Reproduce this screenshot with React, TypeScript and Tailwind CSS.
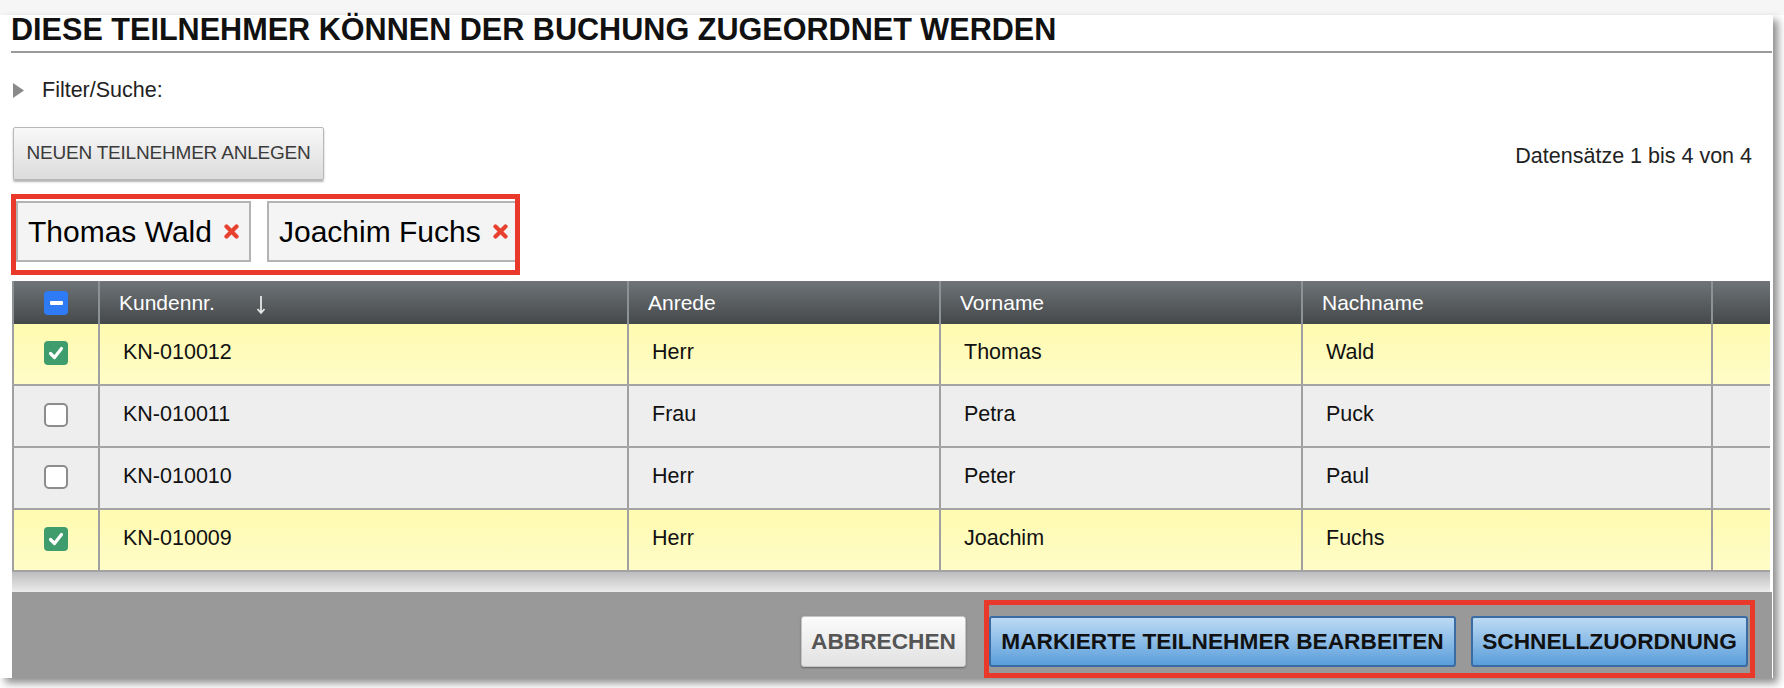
const rows = [
  { sel: true, nr: 'KN-010012', anrede: 'Herr', vorname: 'Thomas', nachname: 'Wald' },
  { sel: false, nr: 'KN-010011', anrede: 'Frau', vorname: 'Petra', nachname: 'Puck' },
  { sel: false, nr: 'KN-010010', anrede: 'Herr', vorname: 'Peter', nachname: 'Paul' },
  { sel: true, nr: 'KN-010009', anrede: 'Herr', vorname: 'Joachim', nachname: 'Fuchs' },
]

const CheckBox = ({ checked }: { checked: boolean }) =>
  checked ? (
    <div className="w-[24px] h-[24px] rounded-[4px] bg-[#3f9c6c] flex items-center justify-center">
      <svg width="18" height="18" viewBox="0 0 18 18">
        <path d="M3.5 9.5 L7.5 13.5 L14.5 4.5" fill="none" stroke="white" strokeWidth="3.2" strokeLinecap="round" strokeLinejoin="round" />
      </svg>
    </div>
  ) : (
    <div className="w-[24px] h-[24px] rounded-[5px] bg-white border-2 border-[#8c8c8c]" />
  )

const Tag = ({ name }: { name: string }) => (
  <div className="shrink-0 h-[61px] flex items-center gap-[12px] px-[10px] bg-[#f4f4f4] border-2 border-[#b3b3b3]">
    <span className="text-[30px] leading-none text-black">{name}</span>
    <svg width="15" height="15" viewBox="0 0 15 15" className="shrink-0">
      <path d="M2.5 2.5 L12.5 12.5 M12.5 2.5 L2.5 12.5" stroke="#e8412f" strokeWidth="4.2" strokeLinecap="round" />
    </svg>
  </div>
)

const App = () => {
  return (
    <div className="w-[1784px] h-[688px] overflow-hidden bg-white font-['Liberation_Sans',Arial,sans-serif] text-[#111]">
      <div className="h-[15px] bg-[#f6f6f6]" />
      <div className="w-[1773px] bg-white shadow-[5px_5px_8px_rgba(0,0,0,0.45)]">
        {/* Title */}
        <h1 className="ml-[11px] mr-[1px] text-[30.6px] leading-[28px] font-bold pb-[8px] border-b-2 border-[#9a9a9a]">
          DIESE TEILNEHMER KÖNNEN DER BUCHUNG ZUGEORDNET WERDEN
        </h1>

        {/* Filter */}
        <div className="mt-[25px] ml-[13px] h-[24px] flex items-center gap-[18px]">
          <svg width="11" height="15" viewBox="0 0 11 15">
            <polygon points="0,0 11,7.5 0,15" fill="#8a8a8a" />
          </svg>
          <span className="text-[21.5px] leading-[24px] text-[#222]">Filter/Suche:</span>
        </div>

        {/* Button row */}
        <div className="mt-[25px] ml-[13px] pr-[21px] flex items-center justify-between">
          <button className="w-[311px] h-[53px] rounded-[2px] border border-[#b8b8b8] bg-gradient-to-b from-[#f8f8f8] to-[#dcdcdc] shadow-[0_2px_2px_rgba(0,0,0,0.3)] text-[19px] text-[#3a3a3a] tracking-[-0.2px]">
            NEUEN TEILNEHMER ANLEGEN
          </button>
          <span className="pt-[5px] text-[21.5px] text-[#222]">Datensätze 1 bis 4 von 4</span>
        </div>

        {/* Selected tags */}
        <div className="mt-[14px] ml-[11px] w-[509px] border-[5px] border-[#e8392b] pt-[2px] pb-[8px] overflow-hidden">
          <div className="flex gap-[16px]">
            <Tag name="Thomas Wald" />
            <Tag name="Joachim Fuchs" />
          </div>
        </div>

        <div className="mt-[6px] ml-[12px] mr-[1px]">
          {/* Table */}
          <div className="w-[1758px]">
            <div className="grid grid-cols-[86px_529px_312px_362px_410px_59px] h-[43px] bg-gradient-to-b from-[#6e7477] to-[#46494c] text-white text-[21px]">
              <div className="border-l-2 border-[#8d9295] flex items-center justify-center">
                <div className="w-[24px] h-[24px] rounded-[4px] bg-[#2f7bf6] flex items-center justify-center">
                  <div className="w-[13px] h-[4px] rounded-[1px] bg-white" />
                </div>
              </div>
              <div className="border-l-2 border-[#8d9295] flex items-center pl-[19px]">
                <span>Kundennr.</span>
                <svg width="12" height="20" viewBox="0 0 12 20" className="ml-[40px] mt-[4px]">
                  <path d="M6 1 L6 18 M2.5 14 L6 18 L9.5 14" fill="none" stroke="#e6e6e6" strokeWidth="1.8" />
                </svg>
              </div>
              <div className="border-l-2 border-[#8d9295] flex items-center pl-[19px]">Anrede</div>
              <div className="border-l-2 border-[#8d9295] flex items-center pl-[19px]">Vorname</div>
              <div className="border-l-2 border-[#8d9295] flex items-center pl-[19px]">Nachname</div>
              <div className="border-l-2 border-[#8d9295]" />
            </div>

            {rows.map((r) => (
              <div
                key={r.nr}
                className={
                  'grid grid-cols-[86px_529px_312px_362px_410px_59px] h-[62px] border-b-2 border-[#a3a3a3] text-[21.5px] leading-[24px] ' +
                  (r.sel ? 'bg-gradient-to-b from-[#fffbb0] to-[#fffcc8]' : 'bg-[#eeeeee]')
                }
              >
                <div className="border-l-2 border-[#a0a0a0] flex justify-center pt-[17px]">
                  <CheckBox checked={r.sel} />
                </div>
                <div className="border-l-2 border-[#a0a0a0] pl-[23px] pt-[16px]">{r.nr}</div>
                <div className="border-l-2 border-[#a0a0a0] pl-[23px] pt-[16px]">{r.anrede}</div>
                <div className="border-l-2 border-[#a0a0a0] pl-[23px] pt-[16px]">{r.vorname}</div>
                <div className="border-l-2 border-[#a0a0a0] pl-[23px] pt-[16px]">{r.nachname}</div>
                <div className="border-l-2 border-[#a0a0a0]" />
              </div>
            ))}
            <div className="h-[20px] bg-gradient-to-b from-[#bdbdbf] to-[#ececec]" />
          </div>

          {/* Footer */}
          <div className="h-[86px] bg-[#999999] flex justify-end items-start pt-[8px] pr-[17px]">
            <button className="mt-[16px] mr-[18px] w-[165px] h-[51px] rounded-[3px] border border-[#c4c4c4] bg-gradient-to-b from-[#fbfbfb] to-[#e2e2e2] shadow-[0_1px_2px_rgba(0,0,0,0.35)] text-[22.7px] font-bold text-[#555]">
              ABBRECHEN
            </button>
            <div className="border-[5px] border-[#e8392b] pt-[11px] pb-[6px] pr-[2px] flex gap-[15px]">
              <button className="w-[467px] h-[51px] rounded-[3px] border-2 border-[#3a6ca3] bg-gradient-to-b from-[#bcdaf3] to-[#5a9edb] text-[22.7px] font-bold text-[#111]">
                MARKIERTE TEILNEHMER BEARBEITEN
              </button>
              <button className="w-[277px] h-[51px] rounded-[3px] border-2 border-[#3a6ca3] bg-gradient-to-b from-[#bcdaf3] to-[#5a9edb] text-[22.7px] font-bold text-[#111]">
                SCHNELLZUORDNUNG
              </button>
            </div>
          </div>
        </div>
      </div>
    </div>
  )
}

export default App
